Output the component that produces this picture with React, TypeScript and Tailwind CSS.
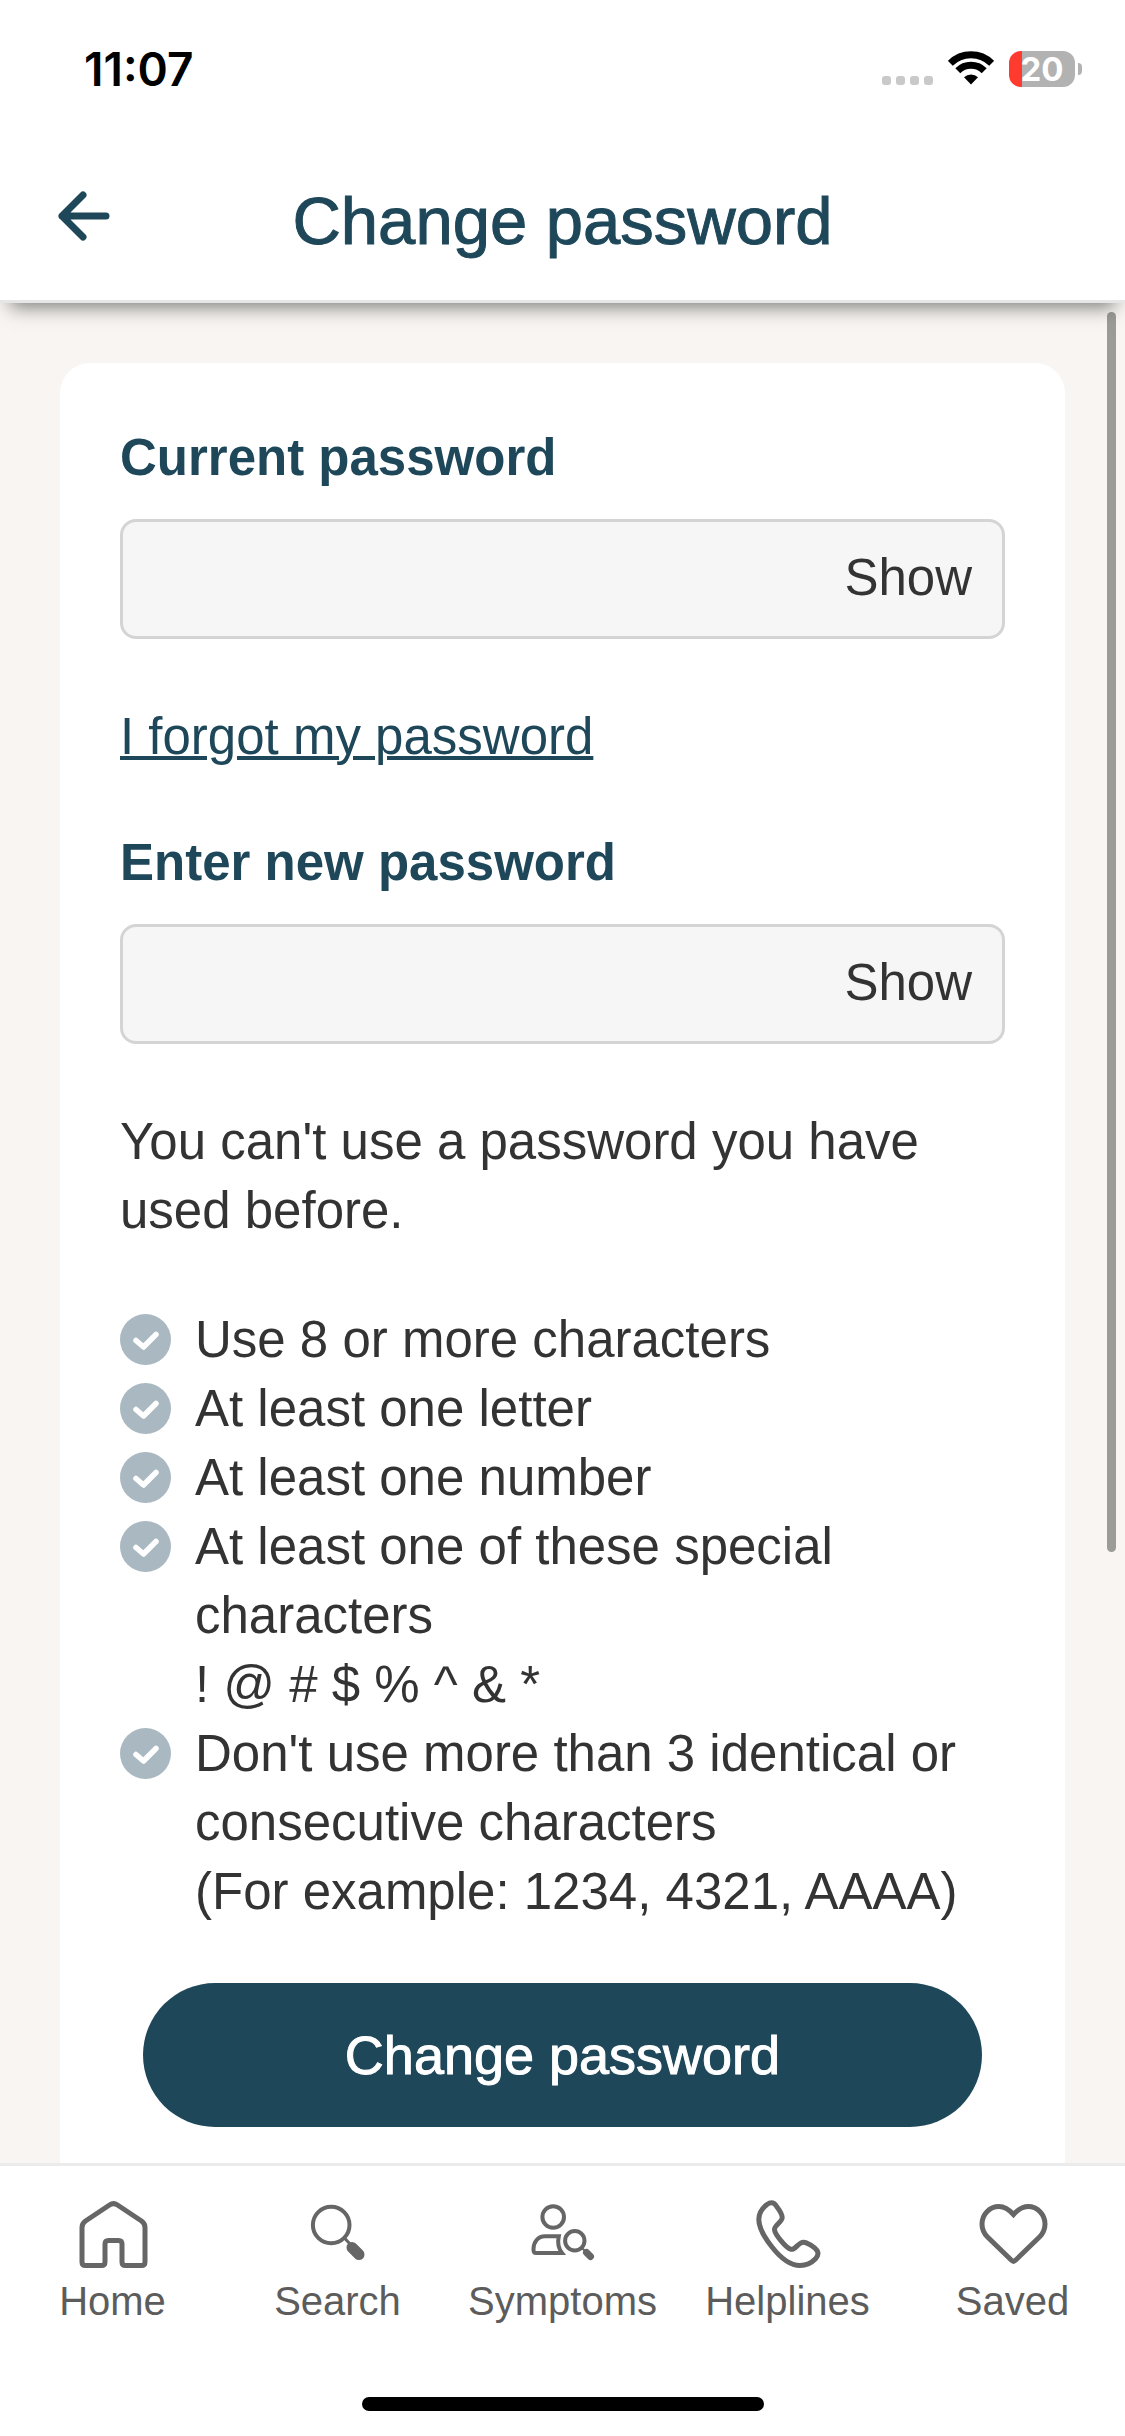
import React from "react";
import { useState } from "react";

const rules = [
    ["Use 8 or more characters"],
    ["At least one letter"],
    ["At least one number"],
    ["At least one of these special characters", "! @ # $ % ^ & *"],
    ["Don't use more than 3 identical or consecutive characters", "(For example: 1234, 4321, AAAA)"],
];

const HomeIcon = () => (
    <svg viewBox="0 0 72 72" className="w-[72px] h-[72px]" fill="none" stroke="#666666" strokeWidth="5" aria-hidden="true">
        <path d="M5 28.5Q5 24.5 8.5 22L32.5 6Q36.5 3.3 40.5 6L64.5 22Q68 24.5 68 28.5V63Q68 66.5 64.5 66.5H48.5Q45 66.5 45 63V45Q45 41.5 41.5 41.5H31.5Q28 41.5 28 45V63Q28 66.5 24.5 66.5H8.5Q5 66.5 5 63Z" />
    </svg>
);

const SearchIcon = () => (
    <svg viewBox="0 0 72 72" className="w-[72px] h-[72px]" fill="none" stroke="#666666" strokeWidth="4" aria-hidden="true">
        <circle cx="29.2" cy="26" r="18.3" />
        <path d="M42 38.5L48 45" strokeWidth="3" />
        <path d="M50 48.5L57 55.5" strokeWidth="11" strokeLinecap="round" />
    </svg>
);

const SymptomsIcon = () => (
    <svg viewBox="0 0 72 72" className="w-[72px] h-[72px]" fill="none" stroke="#666666" strokeWidth="4" aria-hidden="true">
        <circle cx="26.2" cy="18" r="10.8" />
        <path d="M6.5 50C6.5 43 11 37.3 18 37.3H31.8C30.5 43 31.5 49.5 35 54H9Q6.5 54 6.5 51Z" />
        <circle cx="47.8" cy="41.7" r="9.7" />
        <path d="M55 49L58 52" strokeWidth="2" />
        <path d="M59.5 53.5L63.5 57.5" strokeWidth="7" strokeLinecap="round" />
    </svg>
);

const PhoneIcon = () => (
    <svg viewBox="0 0 72 72" className="w-[72px] h-[72px]" fill="none" stroke="#666666" strokeWidth="5" aria-hidden="true">
        <path d="M19.5 3.8C21.5 3.8 23 5 24.5 7.2C27 10.5 30.2 15.5 30.2 18.5C30.2 23 22.5 26 22.5 30.5C22.5 35 34 49 39 50.3C43.5 51.3 46 43.2 51.5 43.2C55 43.2 63 48.5 65 51.5C67 54.5 66 57 63.5 59.8C60 63.5 55 66.5 48 66.5C38 66.5 29 59.5 20 48C12 38 6.8 29 6.8 20.5C6.8 13 11 8.5 15 5.5Q17.5 3.8 19.5 3.8Z" />
    </svg>
);

const HeartIcon = () => (
    <svg viewBox="0 0 72 72" className="w-[72px] h-[72px]" fill="none" stroke="#666666" strokeWidth="5" aria-hidden="true">
        <path d="M36.5 15.5C32 10.5 27 7.5 22 7.5C12.5 7.5 5 15.5 5 25C5 31 7 34.5 10.5 38L34.5 61.3Q36.5 63.2 38.5 61.3L62.5 38C66 34.5 68 31 68 25C68 15.5 60.5 7.5 51 7.5C46 7.5 41 10.5 36.5 15.5Z" />
    </svg>
);

const tabs = [
    { name: "Home", icon: HomeIcon },
    { name: "Search", icon: SearchIcon },
    { name: "Symptoms", icon: SymptomsIcon },
    { name: "Helplines", icon: PhoneIcon },
    { name: "Saved", icon: HeartIcon },
];

const StatusBar = () => (
    <div className="flex items-center justify-between h-[138px] pl-[84px] pr-[43px] font-[Inter,sans-serif]">
        <span className="text-[46px] font-semibold text-black">11:07</span>
        <div className="flex items-end gap-[15px]">
            <div className="flex gap-[5px] mb-0.5">
                <span className="w-[9px] h-[9px] rounded-[3px] bg-[#c9c9c9]"></span>
                <span className="w-[9px] h-[9px] rounded-[3px] bg-[#c9c9c9]"></span>
                <span className="w-[9px] h-[9px] rounded-[3px] bg-[#c9c9c9]"></span>
                <span className="w-[9px] h-[9px] rounded-[3px] bg-[#c9c9c9]"></span>
            </div>
            <svg viewBox="0 0 46 34" className="w-[46px] h-[34px] mb-0.5" fill="none" stroke="black" strokeWidth="7" aria-hidden="true">
                <path d="M2.3 12.3A29.3 29.3 0 0 1 43.7 12.3" />
                <path d="M9.8 19.8A18.7 18.7 0 0 1 36.2 19.8" />
                <path d="M23 33.5L16 26.3A10 10 0 0 1 30 26.3Z" fill="black" stroke="none" />
            </svg>
            <div className="flex items-center gap-[3px]">
                <div className="flex items-center justify-center w-[66px] h-9 rounded-xl bg-linear-to-r from-[#ff3b30] from-20% to-[#b2b2b2] to-20% text-[33px] leading-9 font-bold text-white">20</div>
                <span className="w-1 h-3 rounded-r-full bg-[#b2b2b2]"></span>
            </div>
        </div>
    </div>
);

const PasswordField = ({ id, label }: { id: string; label: string }) => {
    const [value, setValue] = useState("");
    const [visible, setVisible] = useState(false);

    return (
        <div>
            <label htmlFor={id} className="block font-bold text-[#1e4759]">{label}</label>
            <div className="flex items-center h-[120px] mt-[27px] px-[30px] pb-1 border-3 border-[#d4d4d4] rounded-2xl bg-[#f6f6f6]">
                <input
                    id={id}
                    type={visible ? "text" : "password"}
                    value={value}
                    onChange={(e) => setValue(e.target.value)}
                    className="flex-1 min-w-0 bg-transparent focus:outline-none"
                />
                <button type="button" onClick={() => setVisible(!visible)}>{visible ? "Hide" : "Show"}</button>
            </div>
        </div>
    );
};

const App = () => {
    return (
        <div className="flex flex-col min-h-screen bg-[#f8f5f2] font-['Liberation_Sans',Arial,sans-serif] text-[51px] leading-[69px] text-[#333333]">
            <header className="relative z-10 bg-white border-b-3 border-[#e6e6e6] shadow-[0_14px_18px_-10px_rgba(0,0,0,0.5)]">
                <StatusBar />
                <div className="grid grid-cols-[1fr_auto_1fr] items-center h-[162px] px-[58px]">
                    <button type="button" aria-label="Back" className="justify-self-start mb-1.5 text-[#1e4759]">
                        <svg viewBox="0 0 52 50" className="w-[52px] h-[50px]" fill="none" stroke="currentColor" strokeWidth="7" strokeLinecap="round" strokeLinejoin="round" aria-hidden="true">
                            <path d="M25 4L4 25L25 46M4 25H48" />
                        </svg>
                    </button>
                    <h1 className="pt-0.5 text-[67px] text-[#1e4759] [-webkit-text-stroke:1px]">Change password</h1>
                </div>
            </header>

            <main className="relative flex flex-col flex-1 px-[60px] pt-[60px]">
                <form className="flex-1 p-[60px] pb-9 bg-white rounded-t-[30px]" onSubmit={(e) => e.preventDefault()}>
                    <PasswordField id="current" label="Current password" />
                    <p className="mt-[63px] mb-[57px]">
                        <a href="#forgot" className="text-[#1e4759] underline decoration-4">I forgot my password</a>
                    </p>
                    <PasswordField id="new" label="Enter new password" />
                    <p className="mt-[63px] mb-[60px]">You can't use a password you have used before.</p>
                    <ul>
                        {rules.map((lines) => (
                            <li key={lines[0]} className="flex gap-6">
                                <svg viewBox="0 0 51 51" className="w-[51px] h-[51px] mt-[9px] shrink-0" aria-hidden="true">
                                    <circle cx="25.5" cy="25.5" r="25.5" fill="#aab9c1" />
                                    <path d="M16 26.5L23.5 33L36 20.5" fill="none" stroke="white" strokeWidth="5.5" strokeLinecap="round" strokeLinejoin="round" />
                                </svg>
                                <div>
                                    {lines.map((line) => (
                                        <p key={line}>{line}</p>
                                    ))}
                                </div>
                            </li>
                        ))}
                    </ul>
                    <div className="px-[23px] mt-[57px]">
                        <button type="submit" className="w-full h-36 rounded-full bg-[#1e4759] text-[54px] text-white [-webkit-text-stroke:1px]">Change password</button>
                    </div>
                </form>
                <div className="absolute right-[9px] top-[9px] w-[9px] h-2/3 rounded-full bg-[#9b9b98]"></div>
            </main>

            <nav className="bg-white border-t-3 border-[#ebebeb]">
                <ul className="grid grid-cols-5 pt-[33px]">
                    {tabs.map(({ name, icon: Icon }) => (
                        <li key={name}>
                            <a href={`#${name.toLowerCase()}`} className="flex flex-col items-center gap-1.5 text-[40px] leading-[48px] text-[#5c5c5c]">
                                <Icon />
                                {name}
                            </a>
                        </li>
                    ))}
                </ul>
                <div className="w-[402px] h-[14px] mx-auto mt-[72px] mb-[25px] rounded-full bg-black"></div>
            </nav>
        </div>
    );
};

export default App;
